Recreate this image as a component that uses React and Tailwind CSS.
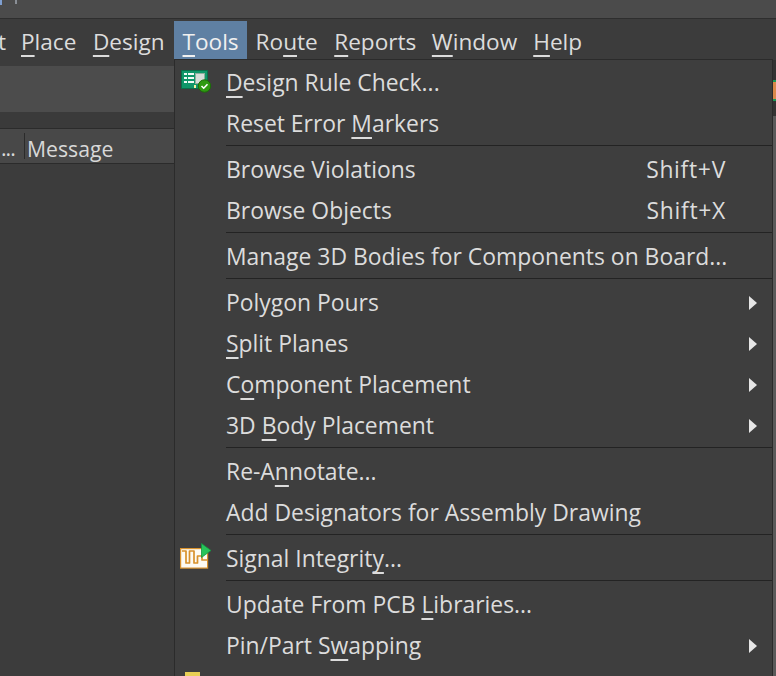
import React from "react";

const font = { fontFamily: '"Open Sans", "Noto Sans", sans-serif' };

const U = ({ children }) => (
  <span className="underline decoration-[1.5px] underline-offset-[5px]">{children}</span>
);

const DrcIcon = () => (
  <svg width="31" height="24" viewBox="0 0 31 24" className="mb-[4px] ml-[1px] block">
    <rect x="0.5" y="1.5" width="26" height="18" fill="#0f9669" stroke="#0b6e4a" />
    <rect x="3" y="4" width="3" height="2" fill="#f0faf5" />
    <rect x="7" y="4" width="6" height="2" fill="#f0faf5" />
    <rect x="3" y="8" width="3" height="2" fill="#f0faf5" />
    <rect x="7" y="8" width="6" height="2" fill="#f0faf5" />
    <rect x="3" y="12" width="3" height="2" fill="#f0faf5" />
    <rect x="7" y="12" width="6" height="2" fill="#f0faf5" />
    <rect x="14.5" y="4.5" width="9" height="10" fill="#d5ddd8" stroke="#8fae9e" />
    <rect x="13" y="16" width="2" height="3" fill="#f4f1a0" />
    <circle cx="23.5" cy="17" r="6.2" fill="#2f9a12" stroke="#1c6b0a" />
    <path d="M20.5 17l2.2 2.2 3.8-4" fill="none" stroke="#ffffff" strokeWidth="1.6" />
  </svg>
);

const SignalIcon = () => (
  <svg width="32" height="26" viewBox="0 0 32 26" className="mb-[6px] block">
    <rect x="0.6" y="5.6" width="27" height="19.5" fill="#fdfaf2" stroke="#d8912c" strokeWidth="1.2" />
    <path d="M2 8h4v12h3.5V8H14v12h3.5v-7H22v4h5" fill="none" stroke="#d8912c" strokeWidth="1.7" strokeLinejoin="round" />
    <path d="M21.5 0.5l9.5 7-9.5 7z" fill="#27c45a" stroke="#149440" strokeWidth="0.8" />
  </svg>
);

const sections = [
  [
    { label: <><U>D</U>esign Rule Check...</>, icon: <DrcIcon /> },
    { label: <>Reset Error <U>M</U>arkers</> },
  ],
  [
    { label: "Browse Violations", shortcut: "Shift+V" },
    { label: "Browse Objects", shortcut: "Shift+X" },
  ],
  [{ label: "Manage 3D Bodies for Components on Board..." }],
  [
    { label: <>Polygon Pours</>, arrow: true },
    { label: <><U>S</U>plit Planes</>, arrow: true },
    { label: <>C<U>o</U>mponent Placement</>, arrow: true },
    { label: <>3D <U>B</U>ody Placement</>, arrow: true },
  ],
  [
    { label: <>Re-A<U>n</U>notate...</> },
    { label: "Add Designators for Assembly Drawing" },
  ],
  [{ label: <>Signal Integrit<U>y</U>...</>, icon: <SignalIcon /> }],
  [
    { label: <>Update From PCB <U>L</U>ibraries...</> },
    { label: <>Pin/Part S<U>w</U>apping</>, arrow: true },
  ],
];

function MenuRow({ item }) {
  return (
    <div className="flex h-[41px] items-center">
      <div className="flex w-[51px] shrink-0 pl-[5px]">{item.icon}</div>
      <span className="flex-1 whitespace-nowrap pt-[2px]">{item.label}</span>
      {item.shortcut && <span className="mr-[46px] pt-[2px] tracking-[0.7px]">{item.shortcut}</span>}
      {item.arrow && (
        <svg width="8" height="14" viewBox="0 0 8 14" className="mr-[15px]">
          <path d="M0 0l8 7-8 7z" fill="#e6e6e6" />
        </svg>
      )}
    </div>
  );
}

function ToolsMenu() {
  return (
    <div className="absolute left-[174px] top-[59px] w-[599px] border-x border-t border-[#2b2b2b] bg-[#3e3e3e] pt-[2px] text-[22.9px] text-[#dcdcdc]">
      {sections.map((rows, i) => (
        <div key={i}>
          {i > 0 && (
            <div className="h-[5px] pl-[51px] pt-[1px]">
              <div className="h-px w-full bg-[#232323]" />
            </div>
          )}
          {rows.map((item, j) => (
            <MenuRow key={j} item={item} />
          ))}
        </div>
      ))}
      <div className="mt-[6px] h-[20px] pl-[10px]">
        <div className="h-[6px] w-[15px] bg-[#e8cf55]" />
      </div>
    </div>
  );
}

function MenuBar() {
  return (
    <div className="flex h-[40px] items-end overflow-hidden bg-[#3c3c3c] text-[22.6px] text-[#dcdcdc]">
      <span className="-ml-[2px] flex h-[38px] w-[14.5px] items-center pt-[4px]">t</span>
      <span className="flex h-[38px] items-center px-[8.5px] pt-[4px]"><U>P</U>lace</span>
      <span className="flex h-[38px] items-center pl-[8px] pr-[9.5px] pt-[4px]"><U>D</U>esign</span>
      <span className="flex h-[38px] w-[73px] items-center justify-center bg-[#5f80a3] pt-[4px] text-[#f0f0f0]"><U>T</U>ools</span>
      <span className="flex h-[38px] items-center px-[8.5px] pt-[4px]">Ro<U>u</U>te</span>
      <span className="flex h-[38px] items-center pl-[8px] pr-[7px] pt-[4px]"><U>R</U>eports</span>
      <span className="flex h-[38px] items-center pl-[8.5px] pr-[7.5px] pt-[4px]"><U>W</U>indow</span>
      <span className="flex h-[38px] items-center px-[8.5px] pt-[4px]"><U>H</U>elp</span>
    </div>
  );
}

export default function App() {
  return (
    <div className="relative h-[676px] w-[776px] overflow-hidden bg-[#3c3c3c] leading-none" style={font}>
      <div className="box-content flex h-[18px] items-start gap-[13px] border-b border-[#2e2e2e] bg-[#4b4b4b]">
        <div className="h-[5px] w-[2px] bg-[#7f9fd0]" />
        <div className="h-[4px] w-[2px] bg-[#8a8f96]" />
      </div>
      <MenuBar />
      <div className="mt-[7px] h-[46px] bg-[#4c4c4c]" />
      <div className="box-content h-[16px] border-b border-[#2b2b2b] bg-[#3a3a3a]" />
      <div className="box-content flex h-[34px] items-center border-b border-[#2b2b2b] bg-[#484848] text-[21.2px] text-[#d8d8d8]">
        <span className="flex h-[26px] w-[25px] items-center border-r border-[#2b2b2b] pl-[1px] pt-[4px] tracking-[-1px]">...</span>
        <span className="pl-[2px] pt-[5px]">Message</span>
      </div>
      <div className="absolute left-[773px] top-[60px] flex h-[616px] w-[3px] flex-col bg-[#333333] pt-[20px]">
        <div className="h-[21px] bg-[#1a9a55] py-[2px]">
          <div className="h-full bg-[#d9884a]" />
        </div>
        <div className="mt-[15px] flex-1 bg-[#5a5a5a]" />
      </div>
      <ToolsMenu />
    </div>
  );
}
